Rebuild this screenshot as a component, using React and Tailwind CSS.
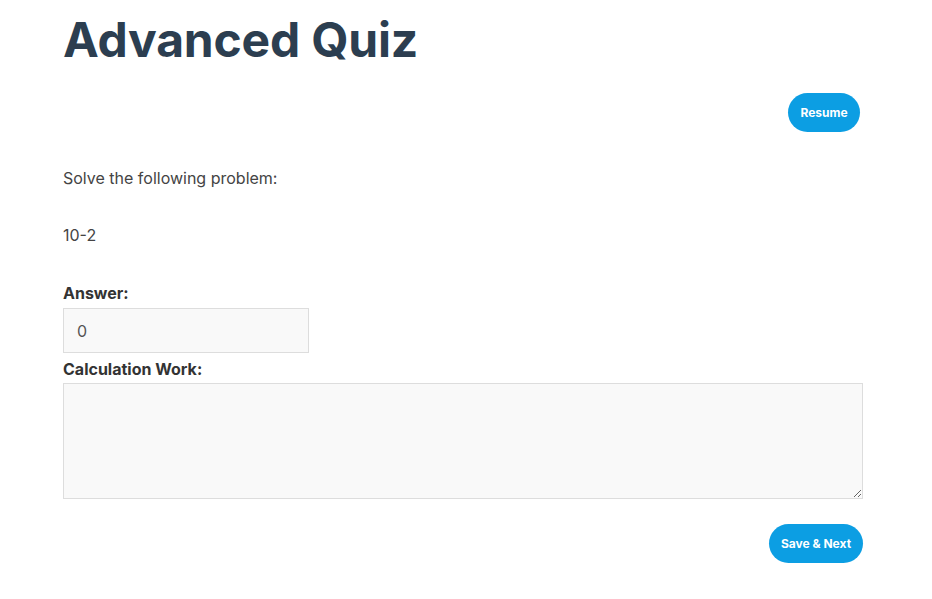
export default function App() {
  return (
    <div className="min-h-[599px] bg-white" style={{ fontFamily: "Inter, 'Noto Sans', sans-serif" }}>
      <div className="w-[800px] ml-[63px] pt-[10px]">
        <h1 className="text-[48px] leading-[60px] font-bold text-[#2c3e50] tracking-[-0.2px]">Advanced Quiz</h1>

        <div className="flex justify-end mt-[23px] pr-[3px]">
          <button className="h-[39px] w-[72px] rounded-full bg-[#0c9ee3] text-white text-[12px] font-bold">Resume</button>
        </div>

        <p className="mt-[36px] text-[16px] leading-[20px] text-[#444]">Solve the following problem:</p>
        <p className="mt-[37px] text-[16px] leading-[20px] text-[#444]">10-2</p>

        <label className="block mt-[38px] text-[16px] leading-[20px] font-bold text-[#333]">Answer:</label>
        <input
          defaultValue="0"
          className="mt-[5px] block w-[246px] h-[45px] px-[13px] bg-[#f9f9f9] border border-[#dddddd] text-[16px] text-[#555] outline-none"
        />
        <label className="block mt-[6px] text-[16px] leading-[20px] font-bold text-[#333]">Calculation Work:</label>
        <textarea className="mt-[4px] block w-[800px] h-[116px] bg-[#f9f9f9] border border-[#dddddd] outline-none" />

        <div className="flex justify-end mt-[25px]">
          <button className="h-[39px] w-[94px] rounded-full bg-[#0c9ee3] text-white text-[12px] font-bold">Save &amp; Next</button>
        </div>
      </div>
    </div>
  );
}
